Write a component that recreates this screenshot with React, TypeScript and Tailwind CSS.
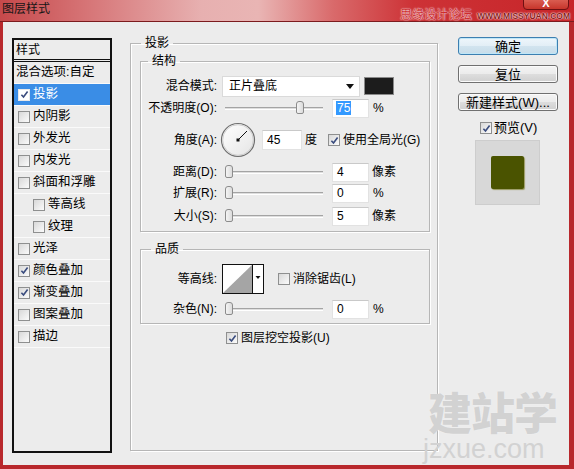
import React from "react";

function Check({ checked = false, sel = false }: { checked?: boolean; sel?: boolean }) {
  return (
    <span
      className={
        "inline-flex w-[12px] h-[12px] shrink-0 items-center justify-center border " +
        (sel
          ? "border-[#e8e8e8] bg-white"
          : "border-[#8e8f8f] bg-[linear-gradient(135deg,#d8d8d8,#fbfbfb)]")
      }
    >
      {checked && (
        <svg width="9" height="9" viewBox="0 0 9 9">
          <path d="M1.4 4.7 L3.5 7 L7.6 1.5" fill="none" stroke="#3a4c7e" strokeWidth="1.6" />
        </svg>
      )}
    </span>
  );
}

function Slider({ left }: { left: number }) {
  return (
    <div className="relative ml-[5px] w-[104px] h-[18px] flex items-center shrink-0">
      <div className="mx-[3px] w-full h-[3px] border-t border-t-[#a4a4a4] border-b border-b-white bg-[#dedede]" />
      <div
        className="absolute top-[2px] w-[8px] h-[13px] rounded-t-[3px] rounded-b-[2px] border border-[#8c8c8c] bg-[linear-gradient(90deg,#f4f4f4,#dcdcdc)]"
        style={{ left }}
      />
    </div>
  );
}

function Field({ value, w = "w-[37px]", sel = false }: { value: string; w?: string; sel?: boolean }) {
  return (
    <div
      className={
        w +
        " ml-[6px] h-[19px] shrink-0 bg-white border border-[#e2e2e2] border-t-[#c9c9c9] flex items-center pl-[3px]"
      }
    >
      {sel ? <span className="bg-[#3399ff] text-white px-[1px] leading-[14px]">{value}</span> : <span className="pl-[1px]">{value}</span>}
    </div>
  );
}

function Label({ children }: { children: React.ReactNode }) {
  return <span className="w-[76px] shrink-0 text-right whitespace-nowrap">{children}</span>;
}

const items: { t: string; checked?: boolean; sel?: boolean; indent?: boolean; plain?: boolean }[] = [
  { t: "混合选项:自定", plain: true },
  { t: "投影", checked: true, sel: true },
  { t: "内阴影" },
  { t: "外发光" },
  { t: "内发光" },
  { t: "斜面和浮雕" },
  { t: "等高线", indent: true },
  { t: "纹理", indent: true },
  { t: "光泽" },
  { t: "颜色叠加", checked: true },
  { t: "渐变叠加", checked: true },
  { t: "图案叠加" },
  { t: "描边" },
];

const groupBox =
  "border border-[#b6b6b6] shadow-[inset_1px_1px_0_#ffffff,1px_1px_0_#ffffff]";

const btn =
  "h-[18px] rounded-[3px] border border-[#707070] bg-[linear-gradient(#f4f4f4,#ebebeb_50%,#dddddd_51%,#d0d0d0)] shadow-[inset_0_0_0_1px_#fbfbfb] text-[13px] leading-none flex items-center justify-center";

export default function App() {
  return (
    <div className="relative w-[574px] h-[469px] overflow-hidden bg-[#b8282c] font-['Liberation_Sans','Noto_Sans_CJK_SC',sans-serif] text-[12px] text-black flex flex-col">
      {/* title bar */}
      <div className="relative h-[22px] shrink-0 border-b border-[#7c1b1e] bg-[linear-gradient(90deg,#c6494b_0%,#d67476_15%,#e7b0b0_35%,#e9b5b4_45%,#d96a6b_58%,#cd3236_72%,#c72529_100%)] flex items-start pl-[2px] pt-[1px]">
        <span className="text-[12px] leading-[17px] text-[#161616]">图层样式</span>
        <div className="absolute left-[523px] top-[-8px] w-[46px] h-[18px] rounded-[4px] border border-[#6f1012] bg-[linear-gradient(#e87b6e,#c7352b)] flex items-end justify-center pb-[1px]">
          <span className="text-white font-bold text-[11px] leading-[10px]">X</span>
        </div>
        <div className="absolute left-[400px] top-[8px] flex items-end gap-[5px] whitespace-nowrap">
          <span className="text-[12px] leading-[14px] text-[#cc2c30] [text-shadow:0_0_2px_#fff,0_0_1px_#fff]">思缘设计论坛</span>
          <span className="text-[8.5px] leading-[11px] font-bold text-[#8a1d20] [text-shadow:0_0_2px_#fff,0_0_1px_#fff]">WWW.MISSYUAN.COM</span>
        </div>
      </div>

      {/* content */}
      <div className="flex-1 ml-[3px] mr-[5px] mb-[4px] bg-[#ececec] flex items-start">
        {/* styles list */}
        <div className="ml-[9px] mt-[16px] w-[100px] h-[415px] shrink-0 border-2 border-[#111] flex flex-col">
          <div className="h-[22px] pl-[2px] flex items-center border-b-[3px] border-double border-[#111]">样式</div>
          {items.map((it) => (
            <div
              key={it.t}
              className={
                "h-[22px] flex items-center border-b border-[#fafafa] whitespace-nowrap " +
                (it.sel ? "bg-[#3a8de6] text-white " : "") +
                (it.plain ? "pl-[2px]" : it.indent ? "pl-[19px] gap-[3px]" : "pl-[4px] gap-[3px]")
              }
            >
              {!it.plain && <Check checked={it.checked} sel={it.sel} />}
              <span className="text-[12.5px]">{it.t}</span>
            </div>
          ))}
        </div>

        {/* main group */}
        <fieldset className={"ml-[18px] mt-[13px] w-[308px] h-[416px] shrink-0 pl-[9px] pr-[7px] " + groupBox}>
          <legend className="ml-[1px] px-[4px] leading-[16px]">投影</legend>

          <fieldset className={"mt-[2px] w-[290px] pb-[5px] " + groupBox}>
            <legend className="ml-[7px] px-[4px] leading-[16px]">结构</legend>
            <div className="flex items-center h-[22px] mt-[6px]">
              <Label>混合模式:</Label>
              <div className="ml-[5px] w-[138px] h-[21px] bg-white border border-[#dadada] flex items-center justify-between pl-[6px] pr-[5px]">
                <span>正片叠底</span>
                <svg width="8" height="5" viewBox="0 0 8 5">
                  <path d="M0 0 H8 L4 5 Z" fill="#111" />
                </svg>
              </div>
              <div className="ml-[4px] w-[30px] h-[18px] bg-[#1c1c1c] border border-[#8a8a8a]" />
            </div>
            <div className="flex items-center h-[20px] mt-[1px]">
              <Label>不透明度(O):</Label>
              <Slider left={74} />
              <Field value="75" sel />
              <span className="ml-[4px]">%</span>
            </div>
            <div className="flex items-center h-[36px] mt-[4px]">
              <Label>角度(A):</Label>
              <svg className="ml-[3px] shrink-0" width="36" height="36" viewBox="0 0 36 36">
                <defs>
                  <linearGradient id="dial" x1="0" y1="0" x2="1" y2="1">
                    <stop offset="0" stopColor="#ffffff" />
                    <stop offset="1" stopColor="#e4e4e4" />
                  </linearGradient>
                </defs>
                <circle cx="18" cy="18" r="16.5" fill="url(#dial)" stroke="#6e6e6e" strokeWidth="1.2" />
                <circle cx="18" cy="18" r="15.3" fill="none" stroke="#c8c8c8" strokeWidth="0.8" />
                <line x1="18" y1="18" x2="27" y2="9" stroke="#111" strokeWidth="1" />
                <rect x="16.5" y="16.5" width="3" height="3" fill="#111" />
              </svg>
              <Field value="45" w="w-[40px] h-[20px]" />
              <span className="ml-[3px]">度</span>
              <span className="ml-[11px] flex items-center gap-[3px] whitespace-nowrap">
                <Check checked />
                <span>使用全局光(G)</span>
              </span>
            </div>
            <div className="flex items-center h-[20px] mt-[4px]">
              <Label>距离(D):</Label>
              <Slider left={3} />
              <Field value="4" />
              <span className="ml-[3px]">像素</span>
            </div>
            <div className="flex items-center h-[20px] mt-[1px]">
              <Label>扩展(R):</Label>
              <Slider left={3} />
              <Field value="0" />
              <span className="ml-[4px]">%</span>
            </div>
            <div className="flex items-center h-[20px] mt-[3px]">
              <Label>大小(S):</Label>
              <Slider left={3} />
              <Field value="5" />
              <span className="ml-[3px]">像素</span>
            </div>
          </fieldset>

          <fieldset className={"mt-[9px] w-[290px] pb-[4px] " + groupBox}>
            <legend className="ml-[10px] px-[4px] leading-[16px]">品质</legend>
            <div className="flex items-center h-[30px] mt-[7px]">
              <Label>等高线:</Label>
              <svg className="ml-[5px] shrink-0" width="42" height="30" viewBox="0 0 42 30">
                <rect x="0.5" y="0.5" width="41" height="29" fill="#fff" stroke="#111" />
                <polygon points="1,29 30,1 30,29" fill="#a5a5a5" />
                <line x1="30.5" y1="0.5" x2="30.5" y2="29.5" stroke="#111" />
                <path d="M33.5 12 H38.5 L36 15 Z" fill="#111" />
              </svg>
              <span className="ml-[14px] flex items-center gap-[3px] whitespace-nowrap">
                <Check />
                <span>消除锯齿(L)</span>
              </span>
            </div>
            <div className="flex items-center h-[20px] mt-[5px]">
              <Label>杂色(N):</Label>
              <Slider left={3} />
              <Field value="0" />
              <span className="ml-[4px]">%</span>
            </div>
          </fieldset>

          <div className="flex items-center h-[14px] mt-[7px] pl-[86px] gap-[3px] whitespace-nowrap">
            <Check checked />
            <span>图层挖空投影(U)</span>
          </div>
        </fieldset>

        {/* right column */}
        <div className="ml-[20px] mt-[15px] w-[100px] shrink-0 flex flex-col">
          <div className="h-[18px] rounded-[3px] border border-[#3c7fb1] bg-[linear-gradient(#eef6fb,#e2eef6_50%,#d2e4ef_51%,#c7dce9)] shadow-[inset_0_0_0_1px_#bfe6f7] text-[13px] leading-none flex items-center justify-center">
            确定
          </div>
          <div className={"mt-[10px] " + btn}>复位</div>
          <div className={"mt-[10px] whitespace-nowrap " + btn}>新建样式(W)...</div>
          <div className="mt-[10px] h-[14px] pl-[22px] flex items-center gap-[2px] text-[13px] whitespace-nowrap">
            <Check checked />
            <span>预览(V)</span>
          </div>
          <div className="mt-[5px] ml-[17px] w-[65px] h-[65px] bg-[#d8d8d8] border border-[#cdcdcd] flex items-center justify-center">
            <div className="w-[33px] h-[33px] rounded-[2px] bg-[#4a5300] shadow-[1px_1px_1px_#9a9a60]" />
          </div>
        </div>
      </div>

      {/* bottom-right watermark */}
      <div className="absolute left-[428px] top-[388px] text-[44px] leading-[46px] font-black text-[#d2d2d2] [text-shadow:0_0_1px_#f8f8f8] tracking-[-1px] font-['Noto_Sans_CJK_SC',sans-serif] pointer-events-none">
        建站学
      </div>
      <div className="absolute left-[423px] top-[436px] text-[27px] leading-[27px] text-[#d2d2d2] font-['Liberation_Sans',sans-serif] pointer-events-none">
        jzxue.com
      </div>
    </div>
  );
}
